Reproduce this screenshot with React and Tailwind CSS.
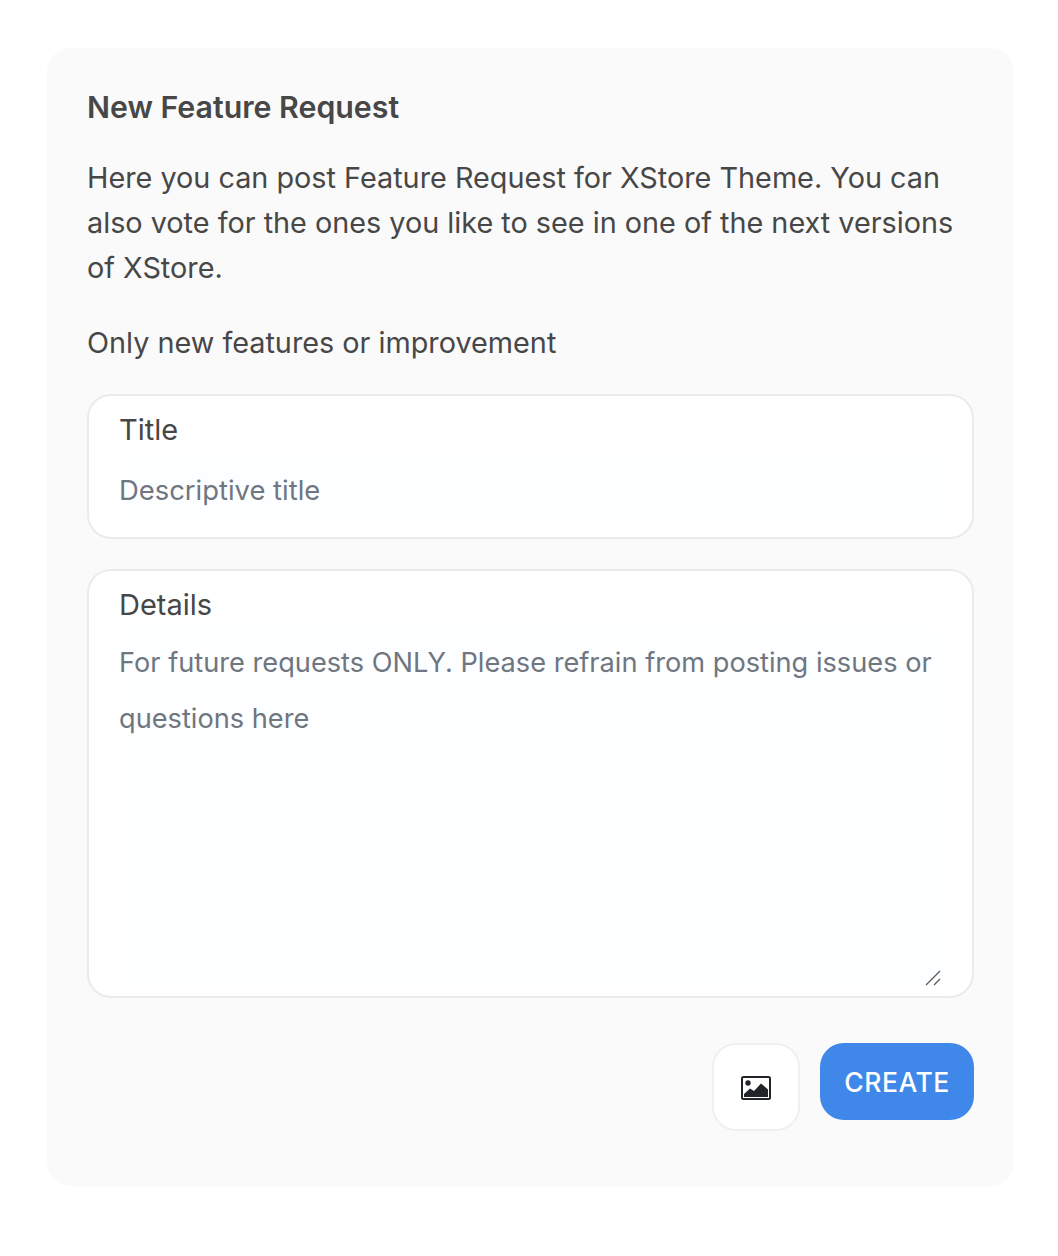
export default function App() {
  return (
    <div className="bg-white min-h-[1256px] pt-12 px-[47px] font-['Inter',sans-serif]" style={{ width: 1058 }}>
      <div className="w-[967px] h-[1138px] bg-[#fafafa] rounded-[24px] px-10 pt-10 text-[#474747]">
        <h2 className="text-[30.3px] leading-[38px] font-semibold">New Feature Request</h2>
        <p className="mt-[29px] text-[28.8px] leading-[45px]">
          Here you can post Feature Request for XStore Theme. You can also vote for the ones you like to see in one of the next versions of XStore.
        </p>
        <p className="mt-[30px] text-[28.8px] leading-[45px]">Only new features or improvement</p>
        <div className="mt-[29px] h-[145px] bg-white border-2 border-[#ebebeb] rounded-[24px] px-[30px] flex flex-col">
          <label className="text-[29px] leading-[40px] mt-[14px]">Title</label>
          <input
            placeholder="Descriptive title"
            className="mt-[1px] pt-[6px] h-[72px] w-full bg-[#fdfeff] outline-none text-[27.4px] placeholder:text-[#6f7680]"
          />
        </div>
        <div className="relative mt-[30px] h-[429px] bg-white border-2 border-[#ebebeb] rounded-[24px] px-[30px] flex flex-col">
          <label className="text-[29px] leading-[40px] mt-[14px]">Details</label>
          <textarea
            placeholder="For future requests ONLY. Please refrain from posting issues or questions here"
            className="mt-[1px] pt-[9px] flex-1 mb-[12px] w-full bg-[#fdfeff] outline-none text-[27.2px] leading-[56px] placeholder:text-[#6f7680] resize-none"
          />
          <svg width="16" height="16" viewBox="0 0 16 16" className="absolute right-[31px] bottom-[10px]">
            <path d="M1 15 L15 1 M9 15 L15 9" stroke="#555" strokeWidth="1.2" fill="none" />
          </svg>
        </div>
        <div className="mt-[45px] flex justify-end items-start gap-5">
          <button className="w-[88px] h-[88px] bg-white border-2 border-[#f0f0f0] rounded-[24px] flex items-center justify-center">
            <svg width="30" height="24" viewBox="0 0 30 24" className="mt-[1px]">
              <rect x="1" y="1" width="28" height="22" rx="1.5" fill="none" stroke="#212529" strokeWidth="2" />
              <circle cx="7" cy="7" r="2.7" fill="#212529" />
              <path d="M3 21 V18 L9 12.5 L13 15 L20 7.5 L27 13.5 V21 Z" fill="#212529" />
            </svg>
          </button>
          <button className="w-[154px] h-[77px] pt-[2px] bg-[#3f87e8] rounded-[24px] text-white text-[26.5px] font-medium tracking-[0.5px]">
            CREATE
          </button>
        </div>
      </div>
    </div>
  );
}
